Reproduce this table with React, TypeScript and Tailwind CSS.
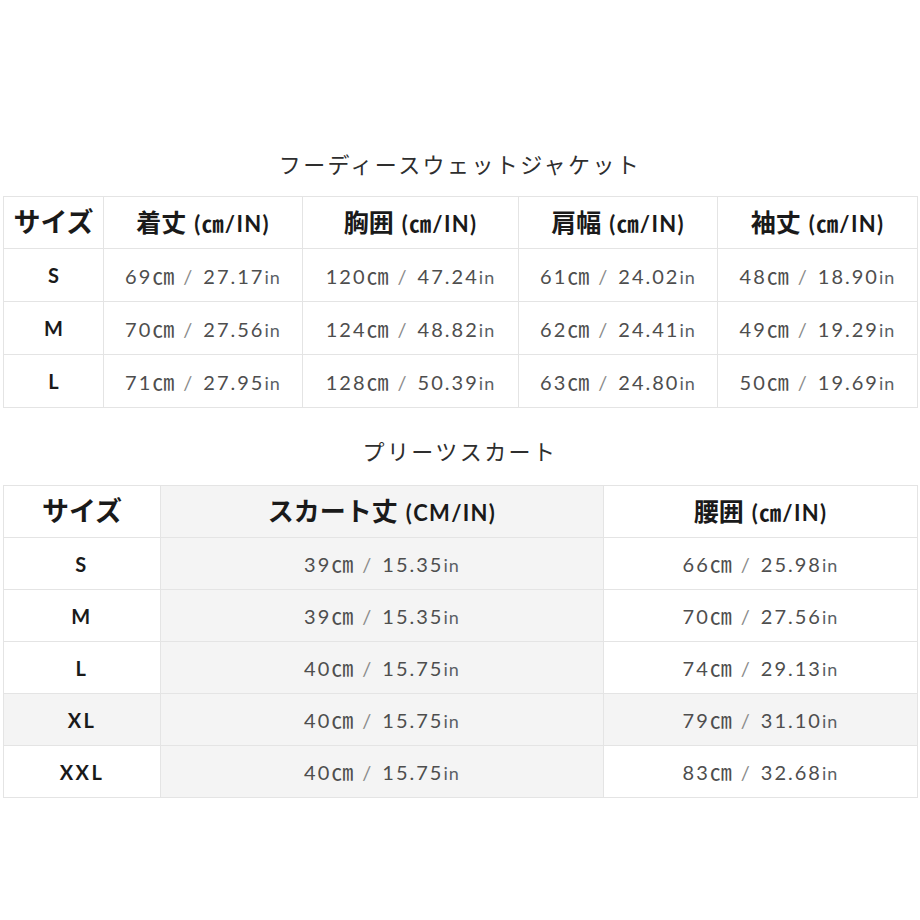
const font = { fontFamily: '"Lato", "Noto Sans CJK JP", sans-serif' };

const jacketHeaders = ["着丈", "胸囲", "肩幅", "袖丈"];
const jacketRows = [
  { size: "S", values: ["69㎝ / 27.17in", "120㎝ / 47.24in", "61㎝ / 24.02in", "48㎝ / 18.90in"] },
  { size: "M", values: ["70㎝ / 27.56in", "124㎝ / 48.82in", "62㎝ / 24.41in", "49㎝ / 19.29in"] },
  { size: "L", values: ["71㎝ / 27.95in", "128㎝ / 50.39in", "63㎝ / 24.80in", "50㎝ / 19.69in"] },
];

const skirtRows = [
  { size: "S", length: "39㎝ / 15.35in", waist: "66㎝ / 25.98in" },
  { size: "M", length: "39㎝ / 15.35in", waist: "70㎝ / 27.56in" },
  { size: "L", length: "40㎝ / 15.75in", waist: "74㎝ / 29.13in" },
  { size: "XL", length: "40㎝ / 15.75in", waist: "79㎝ / 31.10in" },
  { size: "XXL", length: "40㎝ / 15.75in", waist: "83㎝ / 32.68in" },
];

function Value({ text }: { text: string }) {
  const [cm, inch] = text.split(" / ");
  return (
    <span className="whitespace-nowrap text-[20px] tracking-[0.1em] text-[#4e4e4e]">
      {cm.replace("㎝", "")}
      <span className="text-[22px] tracking-normal">㎝</span>
      <span className="mx-[9px] text-[#8a8a8a]">/</span>
      {inch.replace("in", "")}
      <span className="text-[18px] tracking-[0.06em] text-[#5a5f66]">in</span>
    </span>
  );
}

function Title({ children }: { children: string }) {
  return (
    <h2 className="text-center text-[22px] leading-[30px] tracking-[0.11em] text-[#2e2e2e]">
      {children}
    </h2>
  );
}

function Unit({ children }: { children: string }) {
  return <span className="ml-[8px] text-[22px] tracking-[0.06em]">{children}</span>;
}

const cell = "border border-[#e4e4e4] text-center align-middle p-0";

export default function App() {
  return (
    <div className="min-h-[920px] w-[920px] bg-white px-[3px] pt-[150px]" style={font}>
      <Title>フーディースウェットジャケット</Title>

      <table className="mt-[16px] w-[914px] table-fixed border-collapse">
        <colgroup>
          <col className="w-[100px]" />
          <col className="w-[199px]" />
          <col className="w-[216px]" />
          <col className="w-[199px]" />
          <col className="w-[200px]" />
        </colgroup>
        <thead>
          <tr className="h-[52px]">
            <th className={`${cell} text-[27px] font-bold text-[#1a1a1a]`}>サイズ</th>
            {jacketHeaders.map((h) => (
              <th
                key={h}
                className={`${cell} whitespace-nowrap text-[25px] font-bold text-[#1a1a1a]`}
              >
                {h}
                <Unit>(㎝/IN)</Unit>
              </th>
            ))}
          </tr>
        </thead>
        <tbody>
          {jacketRows.map((r) => (
            <tr key={r.size} className="h-[53px]">
              <td className={`${cell} text-[20px] font-bold text-[#1a1a1a]`}>{r.size}</td>
              {r.values.map((v, i) => (
                <td key={i} className={cell}>
                  <Value text={v} />
                </td>
              ))}
            </tr>
          ))}
        </tbody>
      </table>

      <div className="mt-[29px]">
        <Title>プリーツスカート</Title>
      </div>

      <table className="mt-[18px] w-[914px] table-fixed border-collapse">
        <colgroup>
          <col className="w-[157px]" />
          <col className="w-[443px]" />
          <col className="w-[314px]" />
        </colgroup>
        <thead>
          <tr className="h-[52px]">
            <th className={`${cell} text-[27px] font-bold text-[#1a1a1a]`}>サイズ</th>
            <th
              className={`${cell} whitespace-nowrap bg-[#f4f4f4] text-[26px] font-bold text-[#1a1a1a]`}
            >
              スカート丈
              <Unit>(CM/IN)</Unit>
            </th>
            <th className={`${cell} whitespace-nowrap text-[25px] font-bold text-[#1a1a1a]`}>
              腰囲
              <Unit>(㎝/IN)</Unit>
            </th>
          </tr>
        </thead>
        <tbody>
          {skirtRows.map((r) => {
            const shaded = r.size === "XL";
            return (
              <tr key={r.size} className={`h-[52px] ${shaded ? "bg-[#f4f4f4]" : ""}`}>
                <td
                  className={`${cell} text-[20px] font-bold tracking-[0.12em] text-[#1a1a1a]`}
                >
                  {r.size}
                </td>
                <td className={`${cell} bg-[#f4f4f4]`}>
                  <Value text={r.length} />
                </td>
                <td className={cell}>
                  <Value text={r.waist} />
                </td>
              </tr>
            );
          })}
        </tbody>
      </table>
    </div>
  );
}
